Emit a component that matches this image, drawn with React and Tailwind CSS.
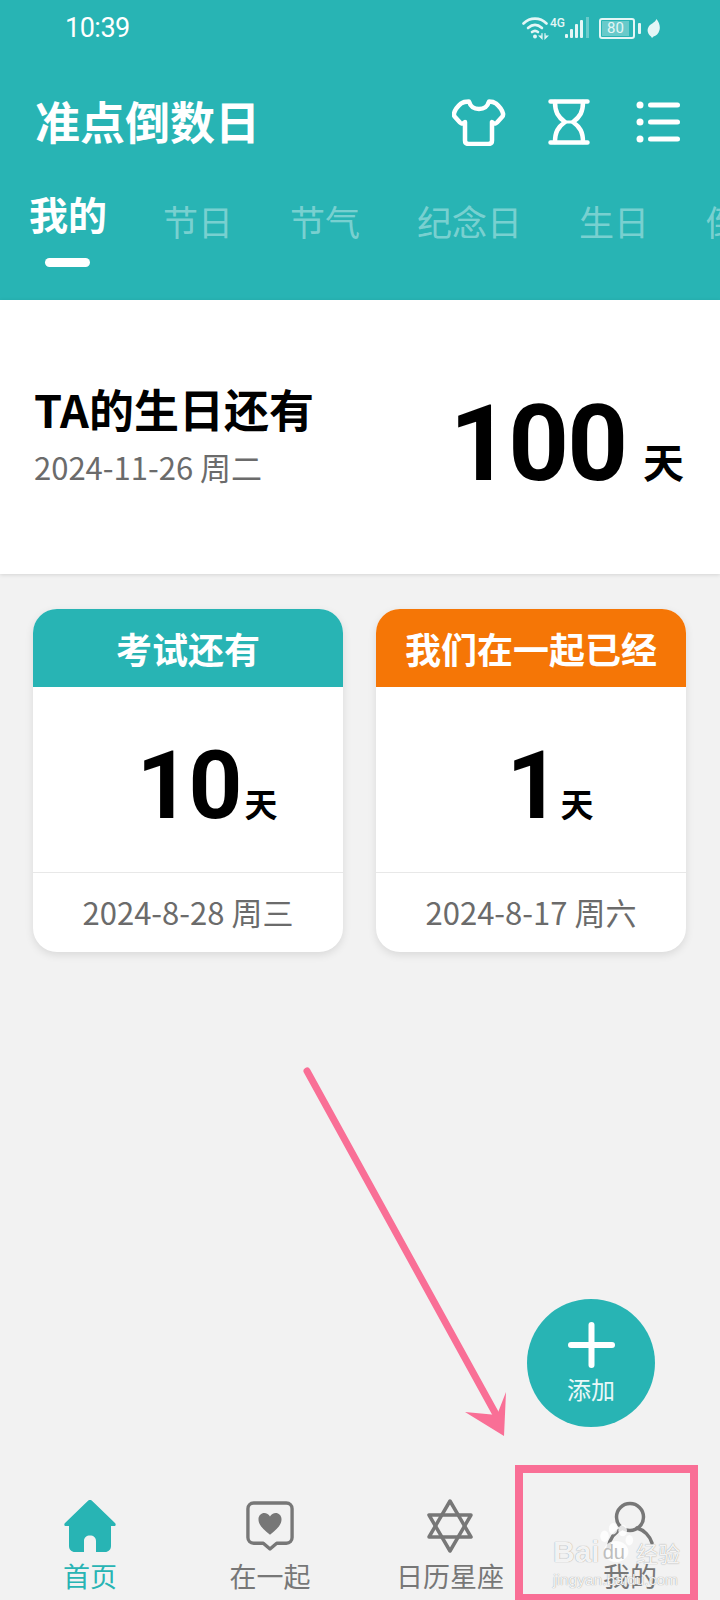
const CJK = 'font-["Noto_Sans_CJK_SC",sans-serif]';

const tabs = ['节日', '节气', '纪念日', '生日', '倒数日'];

const WifiIcon = () => (
  <svg width="27" height="24" viewBox="0 0 27 24" fill="none" stroke="currentColor" strokeWidth="2.6" strokeLinecap="round">
    <path d="M1.5 7.5C8 1 18 1 24.5 7.5" />
    <path d="M6 12c4.500-4 9.500-4 14 0" />
    <path d="M10 16c2-1.600 4-1.600 6 0" />
    <circle cx="13" cy="20.500" r="2" fill="currentColor" stroke="none" />
    <path d="M20 17.500v5l-2.500-2.500h2.500M23 17.500v5l2.500-2.500H23" strokeWidth="1.200" />
  </svg>
);

const SignalIcon = () => (
  <svg width="24" height="22" viewBox="0 0 24 22" fill="currentColor">
    <rect x="0" y="17" width="3" height="4" rx="1" />
    <rect x="5" y="12" width="3" height="9" rx="1" />
    <rect x="10" y="7" width="3" height="14" rx="1" />
    <rect x="15" y="3" width="3" height="18" rx="1" />
    <rect x="21" y="0" width="3" height="21" opacity="0.35" />
  </svg>
);

const LeafIcon = () => (
  <svg width="13" height="19" viewBox="0 0 13 19" fill="currentColor">
    <path d="M9.500 0C12 3 13.500 7 12.500 11c-.800 3.500-3.500 6-6 6.500L5 19l-1-1.500C1 15.500-.5 11.500 1.500 8 3.500 4.500 8 4 9.500 0z" />
  </svg>
);

const ShirtIcon = () => (
  <svg width="54" height="48" viewBox="0 0 54 48" fill="none" stroke="currentColor" strokeWidth="4.500" strokeLinejoin="round" strokeLinecap="round">
    <path d="M17 3.500c1 3.500 4 7.500 10 7.500s9-4 10-7.500c2.500 0 5 .5 7 2 3 2.500 6 6 7 10 .3 1.500 0 2.500-1 3.500l-5 5.500c-1 1-2.500 1.500-3.500.5l-1.500-1v18.500c0 2.500-1.500 3.500-4 3.500H17c-2.500 0-4-1-4-3.500V24l-1.500 1c-1 1-2.500.5-3.500-.5L3 19c-1-1-1.300-2-1-3.500 1-4 4-7.500 7-10 2-1.500 5-2 8-2z" />
  </svg>
);

const HourglassIcon = () => (
  <svg width="42" height="46" viewBox="0 0 42 46" fill="none" stroke="currentColor" strokeWidth="4.500" strokeLinecap="round" strokeLinejoin="round">
    <path d="M2.500 2.500h37M2.500 43.500h37" />
    <path d="M7 3c0 10 3 15 10 20-7 5-10 10-10 20M35 3c0 10-3 15-10 20 7 5 10 10 10 20" />
    <path d="M17 23h8" strokeWidth="3" />
  </svg>
);

const ListIcon = () => (
  <svg width="44" height="42" viewBox="0 0 44 42" fill="currentColor">
    <circle cx="4" cy="4" r="3.500" />
    <circle cx="4" cy="21" r="3.500" />
    <circle cx="4" cy="38" r="3.500" />
    <rect x="12" y="1.500" width="32" height="5" rx="2.500" />
    <rect x="12" y="18.500" width="32" height="5" rx="2.500" />
    <rect x="12" y="35.500" width="32" height="5" rx="2.500" />
  </svg>
);

const HomeIcon = () => (
  <svg width="52" height="52" viewBox="0 0 52 52" fill="#28b4b4">
    <path d="M26 0c1 0 1.800.500 2.500 1.300L51 23c1.200 1.500.8 3-1 3h-3v20c0 3.500-2.500 6-6 6h-9V41c0-3.500-2.500-5.500-6-5.500s-6 2-6 5.500v11h-9c-3.500 0-6-2.500-6-6V26H2c-1.800 0-2.200-1.500-1-3L23.500 1.300C24.200.5 25 0 26 0z" />
  </svg>
);

const TogetherIcon = () => (
  <svg width="48" height="50" viewBox="0 0 50 52" fill="none">
    <path d="M8 2h34c3.500 0 6 2.500 6 6v30c0 3.500-2.500 6-6 6H32l-7 6-7-6H8c-3.500 0-6-2.500-6-6V8c0-3.500 2.500-6 6-6z" stroke="#777777" strokeWidth="3.500" strokeLinejoin="round" />
    <path d="M25 35c-8-6-12-10.500-12-16 0-4 3-6.500 6-6.500 2.500 0 4.700 1.300 6 3.500 1.300-2.200 3.500-3.500 6-3.500 3 0 6 2.500 6 6.500 0 5.500-4 10-12 16z" fill="#777777" />
  </svg>
);

const StarIcon = () => (
  <svg width="50" height="54" viewBox="0 0 50 54" fill="none" stroke="#777777" strokeWidth="3.500" strokeLinejoin="round">
    <path d="M25 2L46 38H4L25 2z" />
    <path d="M25 52L4 16h42L25 52z" />
  </svg>
);

const UserIcon = () => (
  <svg width="50" height="56" viewBox="0 0 50 56" fill="none" stroke="#777777" strokeWidth="3.500" strokeLinecap="round">
    <circle cx="25" cy="19" r="13.500" />
    <path d="M3 50c2-10 8-17 15-20M32 30c7 2 13 8 15 15" />
  </svg>
);

const Card = ({ title, color, days, date, gap }) => (
  <div className="w-[310px] h-[343px] flex flex-col rounded-[24px] overflow-hidden bg-white shadow-[0_3px_8px_rgba(0,0,0,0.1)]">
    <div className={`h-[78px] flex items-center justify-center text-white text-[36px] font-bold ${CJK} ${color}`}>
      {title}
    </div>
    <div className="flex-1 flex items-end justify-center pb-[39px] pl-[38px] text-black">
      <span className="font-['Roboto',sans-serif] font-bold text-[94px] leading-[94px] tracking-[-2px]">{days}</span>
      <span className={`font-bold text-[33px] leading-[44px] mb-[8px] ${gap} ${CJK}`}>天</span>
    </div>
    <div className={`h-[80px] border-t border-[#e8e8e8] flex items-center justify-center text-[31px] text-[#6b6b6b] ${CJK}`}>
      {date}
    </div>
  </div>
);

const NavItem = ({ icon, label, active }) => (
  <div className="w-[180px] flex flex-col items-center pt-[7px]">
    <div className="h-[58px] flex items-center justify-center">{icon}</div>
    <span className={`text-[27px] leading-[36px] mt-[3px] ${active ? 'text-[#28b4b4]' : 'text-[#777777]'} ${CJK}`}>{label}</span>
  </div>
);

export default function App() {
  return (
    <div className={`relative w-[720px] h-[1600px] overflow-hidden flex flex-col bg-[#f2f2f2] ${CJK}`}>
      {/* Header */}
      <div className="h-[300px] bg-[#28b4b4] text-white flex flex-col">
        <div className="h-[54px] flex items-center justify-between pl-[65px] pr-[60px] pt-[2px]">
          <span className="font-['Roboto',sans-serif] text-[27px] tracking-[-0.5px]">10:39</span>
          <div className="flex items-center text-[#e4f6f6]">
            <WifiIcon />
            <span className="font-['Roboto',sans-serif] text-[12px] font-medium self-start mt-[-2px] ml-[1px]">4G</span>
            <SignalIcon />
            <div className="ml-[10px] w-[36px] h-[21px] border-2 border-[#e4f6f6] rounded-[3px] p-[1px] flex">
              <div className="w-[27px] bg-white/30 font-['Roboto',sans-serif] text-[15px] leading-[15px] text-center">80</div>
            </div>
            <div className="w-[3px] h-[11px] bg-[#e4f6f6] ml-[3px] rounded-[1px]" />
            <div className="ml-[6px] flex"><LeafIcon /></div>
          </div>
        </div>
        <div className="mt-[28px] h-[76px] flex items-center justify-between pl-[35px] pr-[40px]">
          <h1 className="text-[45px] font-bold leading-none">准点倒数日</h1>
          <div className="flex items-center mt-[4px]">
            <ShirtIcon />
            <div className="ml-[42px] flex"><HourglassIcon /></div>
            <div className="ml-[46px] flex"><ListIcon /></div>
          </div>
        </div>
        <div className="mt-[30px] h-[60px] flex items-center pl-[29px] gap-[57px] whitespace-nowrap">
          <span className="w-[77px] text-[39px] font-bold leading-none mt-[-10px]">我的</span>
          {tabs.map((tab) => (
            <span key={tab} className="text-[35px] leading-none text-white/40 shrink-0 mt-[4px]">{tab}</span>
          ))}
        </div>
        <div className="ml-[45px] mt-[10px] w-[45px] h-[9px] rounded-full bg-white" />
      </div>

      {/* Next countdown */}
      <div className="h-[274px] bg-white shadow-[0_1px_4px_rgba(0,0,0,0.12)] flex items-center justify-between pl-[34px] pr-[36px]">
        <div className="flex flex-col mt-[-8px]">
          <span className="text-[45px] font-bold leading-[60px] text-black">TA的生日还有</span>
          <span className="text-[31px] leading-[40px] mt-[8px] text-[#6b6b6b]">2024-11-26 周二</span>
        </div>
        <div className="flex items-end text-black mt-[14px]">
          <span className="font-['Roboto',sans-serif] font-bold text-[106px] leading-[106px] tracking-[-2px]">100</span>
          <span className="text-[41px] font-bold leading-[50px] ml-[17px] mb-[12px]">天</span>
        </div>
      </div>

      {/* Cards */}
      <div className="flex-1 px-[33px] pt-[35px] flex gap-[33px] items-start">
        <Card title="考试还有" color="bg-[#28b4b4]" days="10" date="2024-8-28 周三" gap="ml-[4px]" />
        <Card title="我们在一起已经" color="bg-[#f57606]" days="1" date="2024-8-17 周六" gap="ml-[2px]" />
      </div>

      {/* Bottom nav */}
      <div className="h-[110px] flex">
        <NavItem icon={<HomeIcon />} label="首页" active />
        <NavItem icon={<TogetherIcon />} label="在一起" />
        <NavItem icon={<StarIcon />} label="日历星座" />
        <NavItem icon={<UserIcon />} label="我的" />
      </div>

      {/* Add button */}
      <div className="absolute left-[527px] top-[1299px] w-[128px] h-[128px] rounded-full bg-[#28b4b4] text-[#e8f8f8] flex flex-col items-center">
        <svg className="mt-[23px]" width="47" height="46" viewBox="0 0 47 46" fill="#ffffff">
          <rect x="0" y="20" width="47" height="6" rx="3" />
          <rect x="20.500" y="0" width="6" height="46" rx="3" />
        </svg>
        <span className="text-[24px] leading-[28px] mt-[7px]">添加</span>
      </div>

      {/* Annotation */}
      <svg className="absolute left-0 top-0 pointer-events-none" width="720" height="1600" fill="#f96f96">
        <path d="M307 1071L498 1418" stroke="#f96f96" strokeWidth="7" strokeLinecap="round" />
        <path d="M504 1436L506 1392 497 1415 465 1412z" />
      </svg>
      <div className="absolute left-[515px] top-[1465px] w-[183px] h-[135px] border-[8px] border-b-[6px] border-[#f96f96]" />

      {/* Watermark */}
      <div className="absolute left-[553px] top-[1536px] w-[130px] h-[56px] text-white/90">
        <svg className="absolute left-[44px] top-[-14px]" width="38" height="42" viewBox="0 0 38 44" fill="#ffffff" fillOpacity="0.8">
          <ellipse cx="7" cy="15" rx="4.500" ry="6" />
          <ellipse cx="16" cy="7" rx="4.500" ry="6" />
          <ellipse cx="26" cy="9" rx="4.500" ry="6" />
          <ellipse cx="33" cy="19" rx="4" ry="5.500" />
          <ellipse cx="19" cy="31" rx="13" ry="11" />
        </svg>
        <div className="relative flex items-center h-[32px] font-['Liberation_Sans',sans-serif] text-[30px] font-bold leading-none [text-shadow:0_0_1px_#808080]">
          <span>Bai</span>
          <span className="ml-[3px] text-[20px] font-normal [text-shadow:none] text-[#bdbdbd]">du</span>
          <span className={`ml-[11px] text-[22px] font-normal ${CJK}`}>经验</span>
        </div>
        <div className="relative font-['Liberation_Sans',sans-serif] text-[15.500px] leading-[18px] mt-[3px] whitespace-nowrap [text-shadow:0_0_1px_#808080]">jingyan.baidu.com</div>
      </div>
    </div>
  );
}
